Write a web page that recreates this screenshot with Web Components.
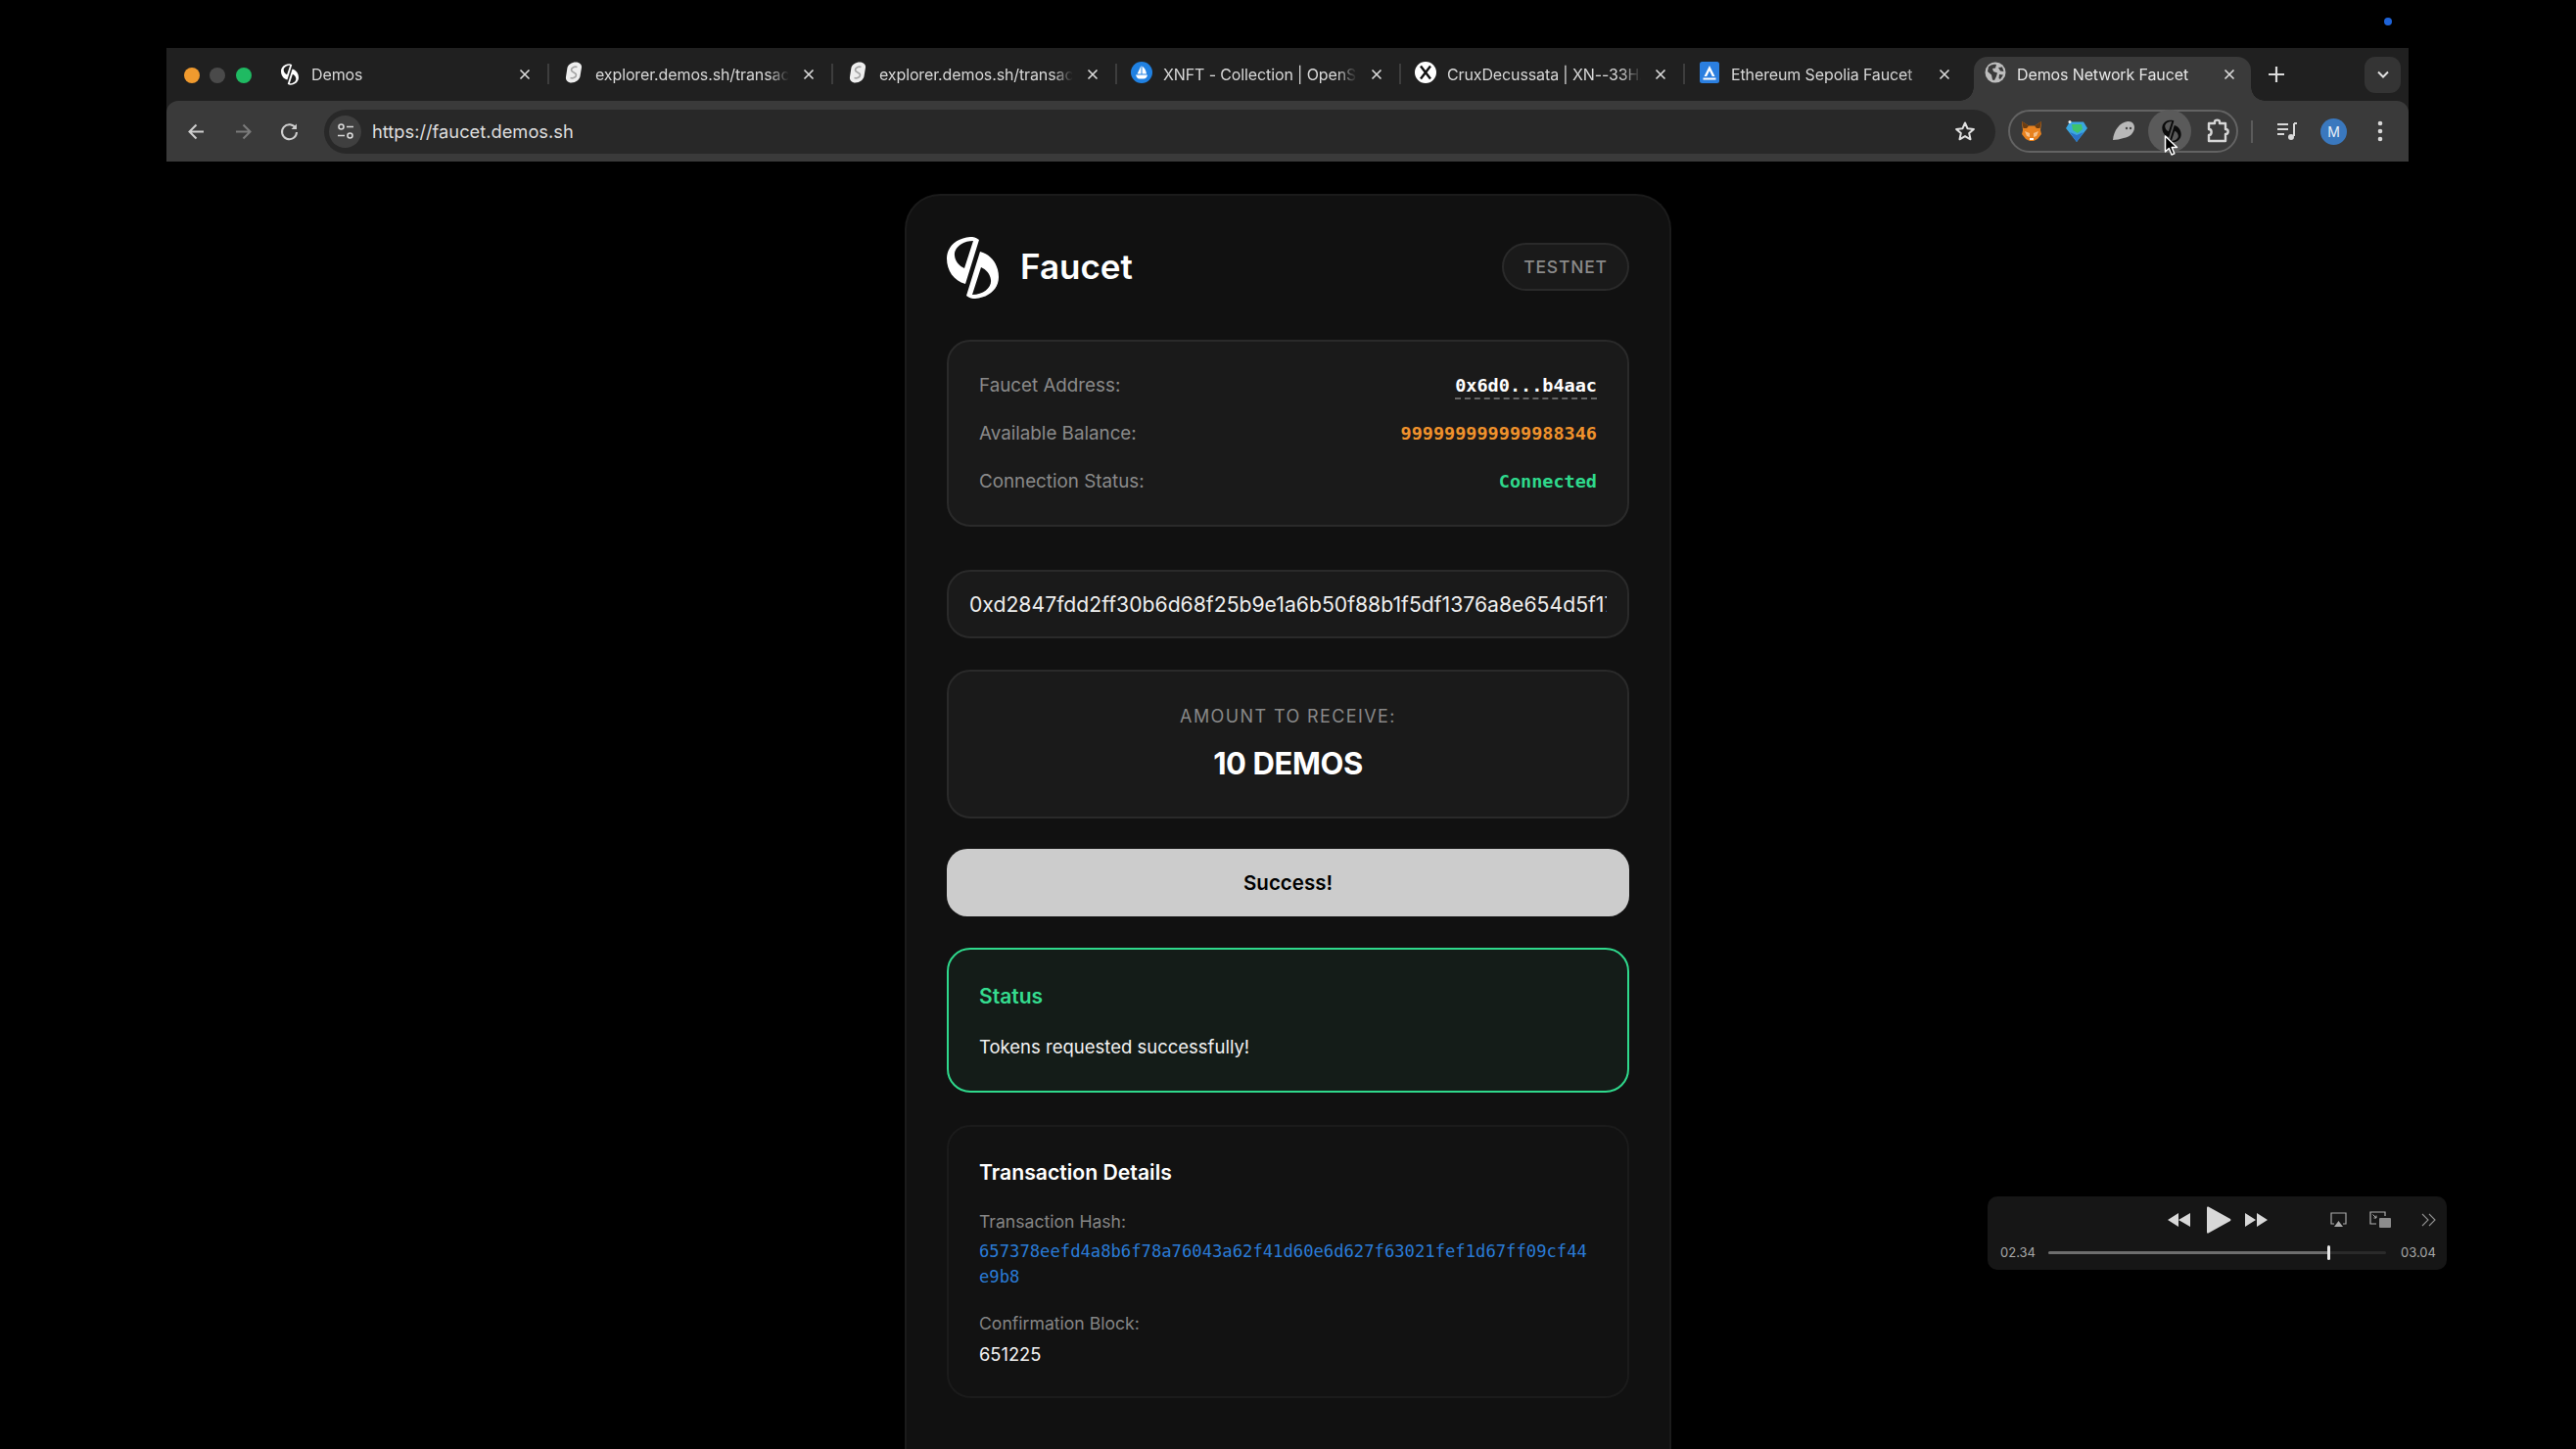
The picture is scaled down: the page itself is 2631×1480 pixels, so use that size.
<!DOCTYPE html>
<html><head><meta charset="utf-8"><style>
html,body{margin:0;background:#000;height:1480px;overflow:hidden;font-family:Inter,"Liberation Sans",sans-serif}
desktop-screen{display:block;height:1480px;overflow:hidden}
</style></head><body>
<desktop-screen>
<browser-window></browser-window>
<faucet-card></faucet-card>
<video-hud></video-hud>
</desktop-screen>
<script>
const def=(n,html)=>customElements.define(n,class extends HTMLElement{constructor(){super();this.attachShadow({mode:'open'}).innerHTML=html}});
const LOGO=(c)=>`<svg viewBox="0 0 53 63" width="100%" height="100%" style="display:block"><path fill-rule="evenodd" fill="${c}" d="M33 3C30 .5 27 0 24 0C10 1 0 10 0 22C0 34 7 45 19 48ZM27 4C15 4 7 12 8 19C8.500 25 13 30 18 32Z"/><path fill-rule="evenodd" fill="${c}" d="M20 60C23 62.500 26 63 29 63C43 62 53 53 53 41C53 29 46 18 34 15ZM26 59C38 59 46 51 45 44C44.500 38 40 33 35 31Z"/></svg>`;
const CLOSE=`<svg viewBox="0 0 12 12" width="12" height="12"><path d="M1.500 1.500L10.500 10.500M10.500 1.500L1.500 10.500" stroke="#dcdcdc" stroke-width="1.600" fill="none"/></svg>`;
const SHIELD=`<svg viewBox="0 0 18 22" width="18" height="22"><path fill="#eee" d="M11 .5C15 .5 17.500 3 17 6L15.500 15C15 18 11 21.500 6.500 21.500C3 21.500 .5 19 1 15.500L2.500 6C3 3 7 .5 11 .5Z"/><path d="M12.500 5.500C10 4.500 6.500 6 6.500 8.500C6.500 11 11.500 11 11.500 13.500C11.500 16 8 17.500 5.500 16.500" stroke="#a5a5a5" stroke-width="1.700" fill="none"/></svg>`;
const FAV={
 demos:`<span style="display:block;width:18px;height:22px">${LOGO('#fff')}</span>`,
 shield:SHIELD,
 os:`<svg viewBox="0 0 22 22" width="22" height="22"><circle cx="11" cy="11" r="11" fill="#2081e2"/><path fill="#fff" d="M10.500 4L6.500 12.500H10.500ZM11.500 4.500V12.500H16C15.500 9 14 6 11.500 4.500ZM5 13.500H17C16.500 16 15 17.500 13 17.500H8.500C7 17.500 5.800 16 5 13.500Z"/></svg>`,
 x:`<svg viewBox="0 0 22 22" width="22" height="22"><circle cx="11" cy="11" r="11" fill="#fff"/><path d="M6 4.500L16 17.500M16 4.500L6 17.500" stroke="#111" stroke-width="2.400"/></svg>`,
 alch:`<svg viewBox="0 0 20 22" width="20" height="22"><rect width="20" height="22" rx="2.500" fill="#2b7fe0"/><path fill="#fff" d="M10 4L15.500 15H12.800L10 9.200L7.200 15H4.500ZM3.500 16.500H16.500V18.500H3.500Z"/></svg>`,
 globe:`<svg viewBox="0 0 22 22" width="22" height="22"><circle cx="11" cy="11" r="10.500" fill="#bdbdbd"/><path fill="#3a3a3a" d="M4 5C7 3 10 2.500 12 3L11 6.500L8 7L9 10L13 11.500L12 15L10 19L8 18.500L7 13.500L3 10ZM14 6L18 5.500L19.500 10L16 9.500ZM15 13L19 13.500L16 18L14.500 17Z"/></svg>`
};
def('browser-tab',`<style>
:host{display:flex;align-items:center;box-sizing:border-box;width:290px;height:100%;padding:0 0 0 15px;position:relative;color:#d8d8d8;font:400 16px Inter,"Liberation Sans",sans-serif;letter-spacing:-.12px;flex:none}
.ic{width:22px;height:24px;display:flex;align-items:center;justify-content:center;flex:none}
.t{margin-left:11px;width:202px;flex:none;overflow:hidden;white-space:nowrap;-webkit-mask-image:linear-gradient(90deg,#000 88%,transparent 98%);mask-image:linear-gradient(90deg,#000 88%,transparent 98%)}
.c{margin-left:10px;display:flex;flex:none}
.s{position:absolute;right:-1px;top:16px;width:2px;height:21px;background:#3d3d3d}
:host([active]){background:#3a3a3a;border-radius:14px 14px 0 0;width:283px;height:45px;margin-left:6px;padding:0 0 9px 11px;color:#e6e6e6}
:host([active]) .s,:host([nosep]) .s{display:none}
:host([active]) .t{width:199px;margin-left:11px}
:host([active]) .c{margin-left:12px}
:host([active]) .fl{position:absolute;bottom:0;width:14px;height:14px;display:block}
.fl{display:none}
.fl.a{left:-14px;background:radial-gradient(circle at 0 0,transparent 13.500px,#3a3a3a 14px)}
.fl.b{right:-14px;background:radial-gradient(circle at 100% 0,transparent 13.500px,#3a3a3a 14px)}
</style><span class="ic"><slot name="i"></slot></span><span class="t"><slot></slot></span><span class="c">${CLOSE}</span><span class="s"></span><span class="fl a"></span><span class="fl b"></span>`);
def('browser-tabs',`<style>
:host{display:flex;align-items:flex-end;height:54px;background:#202020;box-sizing:border-box;position:relative}
.lights{display:flex;gap:10.500px;padding-left:17.500px;width:100px;box-sizing:border-box;align-self:center;margin-top:1px;flex:none}
.lights i{width:16px;height:16px;border-radius:50%;display:block}
.row{display:flex;height:54px;align-items:center;width:2029px;flex:none}
.row ::slotted([active]){align-self:flex-end}
.plus{width:50px;margin-left:1px;display:flex;justify-content:center;align-self:center;margin-top:-1px;flex:none}
.more{width:37px;height:37px;border-radius:11px;background:#343434;display:flex;align-items:center;justify-content:center;margin-left:65px;align-self:center;margin-top:0;flex:none}
</style><div class="lights"><i style="background:#f09a2e"></i><i style="background:#4a4a4a"></i><i style="background:#1fba62"></i></div>
<div class="row"><slot></slot></div>
<span class="plus"><svg width="18" height="18" viewBox="0 0 18 18"><path d="M9 1V17M1 9H17" stroke="#dcdcdc" stroke-width="2.200"/></svg></span>
<span class="more"><svg width="14" height="9" viewBox="0 0 14 9"><path d="M2 1.500L7 6.500L12 1.500" stroke="#e0e0e0" stroke-width="2" fill="none"/></svg></span>`);
def('browser-toolbar',`<style>
:host{display:flex;align-items:center;height:62px;background:#3a3a3a;box-sizing:border-box;border-radius:12px 12px 0 0}
.nav{display:flex;align-items:center;width:161px;padding-left:20px;box-sizing:border-box;gap:26.500px;flex:none}
.nav svg{flex:none;width:21px;height:21px;display:block}
.omni{width:1707px;height:45px;background:#282828;border-radius:23px;display:flex;align-items:center;box-sizing:border-box;padding-left:5px;flex:none;color:#dedede;font-size:18.300px}
.info{width:33px;height:33px;border-radius:50%;background:#3f3f3f;display:flex;align-items:center;justify-content:center;margin-right:11px;flex:none}
.url{flex:1}
.star{margin-right:20px;display:flex}
.pill{margin-left:13px;width:235px;height:44px;box-sizing:border-box;border:2px solid #636363;border-radius:22px;display:flex;align-items:center;position:relative;flex:none}
.pill span{position:absolute;top:50%;transform:translate(-50%,-50%);display:flex}
.hover{width:44px;height:44px;border-radius:50%;background:#5a5a5a}
.pill .cur{left:157px;top:24px;transform:none}
.sep{width:2px;height:23px;background:#5b5b5b;margin-left:13px;flex:none}
.music{margin-left:24px;display:flex}
.av{width:27px;height:27px;border-radius:50%;background:#3a78be;color:#e6eef8;font-size:14px;display:flex;align-items:center;justify-content:center;margin-left:23px;flex:none}
.dots{margin-left:31px;display:flex}
</style>
<div class="nav">
<svg viewBox="0 0 21 21"><path d="M18 10.500H4M10.500 3.500L3.500 10.500L10.500 17.500" stroke="#cfcfcf" stroke-width="2" fill="none"/></svg>
<svg viewBox="0 0 21 21"><path d="M3 10.500H17M10.500 3.500L17.500 10.500L10.500 17.500" stroke="#7b7b7b" stroke-width="2" fill="none"/></svg>
<svg viewBox="0 0 21 21"><path d="M17 7A7.500 7.500 0 1 0 18 11" stroke="#cfcfcf" stroke-width="2" fill="none"/><path d="M18 2.500V8H12.500Z" fill="#cfcfcf"/></svg>
</div>
<div class="omni"><span class="info"><svg width="18" height="18" viewBox="0 0 18 18" fill="none" stroke="#d8d8d8" stroke-width="1.600"><circle cx="4.500" cy="4.500" r="2.500"/><path d="M10 4.500H17M1 13.500H8"/><circle cx="13.500" cy="13.500" r="2.500"/></svg></span>
<span class="url">https://faucet.demos.sh</span>
<span class="star"><svg width="22" height="22" viewBox="0 0 22 22"><path d="M11 2.500L13.600 8.300L19.900 8.900L15.200 13.100L16.500 19.300L11 16.100L5.500 19.300L6.800 13.100L2.100 8.900L8.400 8.300Z" fill="none" stroke="#e0e0e0" stroke-width="2" stroke-linejoin="round"/></svg></span></div>
<div class="pill">
<span style="left:22px"><svg width="22" height="22" viewBox="0 0 22 22"><path fill="#e8821f" d="M1 1L8 5.500H14L21 1L20 10L21 14L17 19L13 21H9L5 19L1 14L2 10Z"/><path fill="#6b3d12" d="M1 1L8 5.500L6 8L2.500 8ZM21 1L14 5.500L16 8L19.500 8Z"/><path fill="#f6c089" d="M4 11L9 13V17L6 16ZM18 11L13 13V17L16 16Z"/><path fill="#fff" d="M9 18H13V20H9Z"/></svg></span>
<span style="left:68px"><svg width="24" height="24" viewBox="0 0 24 24"><path fill="#3aa6e0" d="M5 2.500H19L23 9L12 23L1 9Z"/><path fill="#3fc36b" d="M7 5H17L18 10L13 14L8 11Z"/><path fill="#2a72c8" d="M5 13L12 23L19 13L12 16Z"/><circle cx="5" cy="2.500" r="1.500" fill="#eee"/></svg></span>
<span style="left:116px"><svg width="24" height="22" viewBox="0 0 24 22"><path fill="#b8b8b8" d="M1 20C2 10 8 2 16 1C21 .5 23 4 23 7C23 13 18 17 12 18C8 19 5 20 1 20Z"/><circle cx="15" cy="8" r="1.200" fill="#444"/><circle cx="19" cy="8" r="1.200" fill="#444"/></svg></span>
<span class="hover" style="left:163px"></span>
<span style="left:165px"><span style="position:static;transform:none;display:block;width:20px;height:23px">${LOGO('#0b0b0b')}</span></span>
<span class="cur"><svg width="16" height="22" viewBox="0 0 16 22"><path d="M1.500 1V17L5.300 13.500L8 20L10.800 18.800L8.200 12.500H13.500Z" fill="#000" stroke="#fff" stroke-width="1.500" stroke-linejoin="round"/></svg></span>
<span style="left:212px"><svg width="24" height="26" viewBox="0 0 24 26" fill="none" stroke="#d6d6d6" stroke-width="2.400" stroke-linejoin="round"><path d="M3 5H9V3.500C9 1 14 1 14 3.500V5H20V11C23.500 11 23.500 16 20 16V23H3V17C6.500 17 6.500 11 3 11Z"/></svg></span>
</div>
<span class="sep"></span>
<span class="music"><svg width="22" height="22" viewBox="0 0 22 22" fill="none" stroke="#d8d8d8" stroke-width="2"><path d="M1 4H12M1 9H12M1 14H8"/><path d="M18 3V16"/><path d="M18 3H21"/><circle cx="15" cy="17" r="3" fill="#d8d8d8" stroke="none"/></svg></span>
<span class="av">M</span>
<span class="dots"><svg width="6" height="22" viewBox="0 0 6 22"><circle cx="3" cy="3" r="2.300" fill="#d8d8d8"/><circle cx="3" cy="11" r="2.300" fill="#d8d8d8"/><circle cx="3" cy="19" r="2.300" fill="#d8d8d8"/></svg></span>`);
def('browser-window',`<style>:host{display:block;margin:49px 171px 0 170px;background:#202020}</style><browser-tabs>
<browser-tab><span slot="i">${FAV.demos}</span>Demos</browser-tab>
<browser-tab><span slot="i">${FAV.shield}</span>explorer.demos.sh/transactions</browser-tab>
<browser-tab><span slot="i">${FAV.shield}</span>explorer.demos.sh/transactions</browser-tab>
<browser-tab><span slot="i">${FAV.os}</span>XNFT - Collection | OpenSea</browser-tab>
<browser-tab><span slot="i">${FAV.x}</span>CruxDecussata | XN--33HAA</browser-tab>
<browser-tab nosep><span slot="i">${FAV.alch}</span>Ethereum Sepolia Faucet</browser-tab>
<browser-tab active><span slot="i">${FAV.globe}</span>Demos Network Faucet</browser-tab>
</browser-tabs><browser-toolbar></browser-toolbar>`);
def('info-row',`<style>:host{display:flex;justify-content:space-between;align-items:center;height:49px;font:400 18.800px Inter,"Liberation Sans",sans-serif;color:#8a8a8a}
::slotted([slot=v]){font:700 18.500px "DejaVu Sans Mono",monospace}</style><slot name="l"></slot><slot name="v"></slot>`);
def('panel-box',`<style>:host{display:block;box-sizing:border-box;background:#1a1a1a;border:2px solid #2a2a2a;border-radius:24px}</style><slot></slot>`);
def('faucet-card',`<style>
:host{display:block;box-sizing:border-box;width:783px;height:1282px;margin:33px 0 0 924px;background:#111;border:2px solid #1b1b1b;border-bottom:0;border-radius:36px 36px 0 0;padding:42px 41px 0;color:#fff;font-family:Inter,"Liberation Sans",sans-serif}
.hd{display:flex;justify-content:space-between;align-items:flex-start;height:63px;margin-bottom:42px}
.brand{display:flex;align-items:center;gap:22px;font-size:35px;font-weight:600;letter-spacing:0;line-height:60px}
.brand span:last-child{position:relative;top:-2px}
.logo{width:53px;height:63px;display:block}
.tn{width:130px;height:49px;margin-top:6px;box-sizing:border-box;border-radius:25px;background:#1a1a1a;border:2px solid #2a2a2a;color:#8a8a8a;display:flex;align-items:center;justify-content:center;font-size:17.500px;font-weight:500;letter-spacing:.8px}
.info{height:191px;padding:20px 31px;margin-bottom:44px}
.addr{color:#fff;border-bottom:2px dashed #666;line-height:22px;padding:3px 0 1px}
.bal{color:#f0922c}.con{color:#2fd98c}
.inp{height:70px;padding:0 21px 0 21px;display:flex;align-items:center;margin-bottom:32px;font-size:21.200px;color:#eee}
.inp div{overflow:hidden;white-space:nowrap}
.amt{height:152px;margin-bottom:31px;display:flex;flex-direction:column;align-items:center;padding-top:35px}
.amt .l{color:#888;font-size:18px;letter-spacing:1.400px;line-height:22px}
.amt .v{font-size:31px;font-weight:700;letter-spacing:-.4px;line-height:40px;margin-top:17px}
.btn{height:69px;border-radius:21px;background:#ccc;color:#000;display:flex;align-items:center;justify-content:center;font-size:20.500px;font-weight:600;margin-bottom:32px}
.st{height:148px;box-sizing:border-box;background:#141c18;border:2px solid #2fd98c;border-radius:24px;padding:33px 31px 0;margin-bottom:33px}
.st .h{color:#35dc8f;font-size:21px;font-weight:600;line-height:30px;margin-bottom:21px}
.st .b{font-size:18.500px;line-height:30px;color:#f2f2f2}
.tx{height:279px;box-sizing:border-box;background:#121212;border:2px solid #1b1b1b;border-radius:24px;padding:31px 31px 0}
.tx .h{font-size:21.200px;font-weight:600;line-height:30px;margin-bottom:22px}
.tx .l{color:#858585;font-size:17.600px;line-height:28px}
.tx .hash{font:400 17.200px/26px "DejaVu Sans Mono",monospace;color:#2a7bd6;word-break:break-all;margin:3px 0 21px;padding-right:5px}
.tx .n{font-size:18.300px;line-height:30px;margin-top:2px;color:#f2f2f2}
</style>
<div class="hd"><div class="brand"><span class="logo">${LOGO('#fff')}</span><span>Faucet</span></div><div class="tn">TESTNET</div></div>
<panel-box class="info">
<info-row><span slot="l">Faucet Address:</span><span slot="v" class="addr">0x6d0...b4aac</span></info-row>
<info-row><span slot="l">Available Balance:</span><span slot="v" class="bal">999999999999988346</span></info-row>
<info-row><span slot="l">Connection Status:</span><span slot="v" class="con">Connected</span></info-row>
</panel-box>
<panel-box class="inp"><div>0xd2847fdd2ff30b6d68f25b9e1a6b50f88b1f5df1376a8e654d5f17</div></panel-box>
<panel-box class="amt"><div class="l">AMOUNT TO RECEIVE:</div><div class="v">10 DEMOS</div></panel-box>
<div class="btn">Success!</div>
<div class="st"><div class="h">Status</div><div class="b">Tokens requested successfully!</div></div>
<div class="tx"><div class="h">Transaction Details</div>
<div class="l">Transaction Hash:</div>
<div class="hash">657378eefd4a8b6f78a76043a62f41d60e6d627f63021fef1d67ff09cf44e9b8</div>
<div class="l">Confirmation Block:</div><div class="n">651225</div></div>`);
def('video-hud',`<style>
:host{position:absolute;left:2030px;top:1222px;width:469px;height:75px;background:#161616;border-radius:10px;font:400 13px Inter,"Liberation Sans",sans-serif;color:#a8a8a8;box-sizing:border-box;display:flex;flex-direction:column;padding:9px 12px 0 13px}
.top{height:32px;position:relative;display:flex;align-items:center}
.top svg{position:absolute}
.bot{display:flex;align-items:center;margin-top:6px;height:20px}
.tr{width:345px;height:3px;background:#2a2a2a;margin:0 15px 0 13px;border-radius:2px;position:relative;flex:none}
.tr i{display:block;width:286px;height:3px;background:#6e6e6e;border-radius:2px}
.tr b{position:absolute;left:285px;top:-6px;width:3px;height:15px;background:#e8e8e8;border-radius:2px}
.d{position:fixed;left:2435px;top:18px;width:8px;height:8px;background:#1e63d8;border-radius:50%}
</style>
<div class="top">
<svg style="left:171px;top:8px" width="23" height="14" viewBox="0 0 23 14" fill="#d8d8d8"><path d="M0 7L11 0V14ZM11 7L23 0V14Z"/></svg>
<svg style="left:211px;top:1px" width="25" height="28" viewBox="0 0 25 28" fill="#d8d8d8"><path d="M0 1.500Q0 0 1.500 .5L24 13Q25 14 24 15L1.500 27.500Q0 28 0 26.500Z"/></svg>
<svg style="left:250px;top:8px" width="23" height="14" viewBox="0 0 23 14" fill="#d8d8d8"><path d="M0 0L11 7L0 14ZM12 0L23 7L12 14Z"/></svg>
<svg style="left:337px;top:7px" width="17" height="16" viewBox="0 0 17 16" fill="none"><path d="M4 12H1V1H16V12H13" stroke="#a8a8a8" stroke-width="1.200"/><path d="M8.500 9L13 15H4Z" fill="#a8a8a8"/></svg>
<svg style="left:377px;top:6px" width="22" height="18" viewBox="0 0 22 18" fill="none"><path d="M7 13H1V1H16V5" stroke="#b0b0b0" stroke-width="1.200"/><rect x="10" y="7" width="12" height="10" rx="1" fill="#8c8c8c"/><path d="M3.500 3.500L7 7M7 4.500V7H4.500" stroke="#b0b0b0"/></svg>
<svg style="left:430px;top:8px" width="15" height="14" viewBox="0 0 15 14" fill="none" stroke="#909090" stroke-width="1.100"><path d="M1 1L7 7L1 13M8 1L14 7L8 13"/></svg>
</div>
<div class="bot"><span>02.34</span><div class="tr"><i></i><b></b></div><span>03.04</span></div><span class="d"></span>`);
</script>
</body></html>
